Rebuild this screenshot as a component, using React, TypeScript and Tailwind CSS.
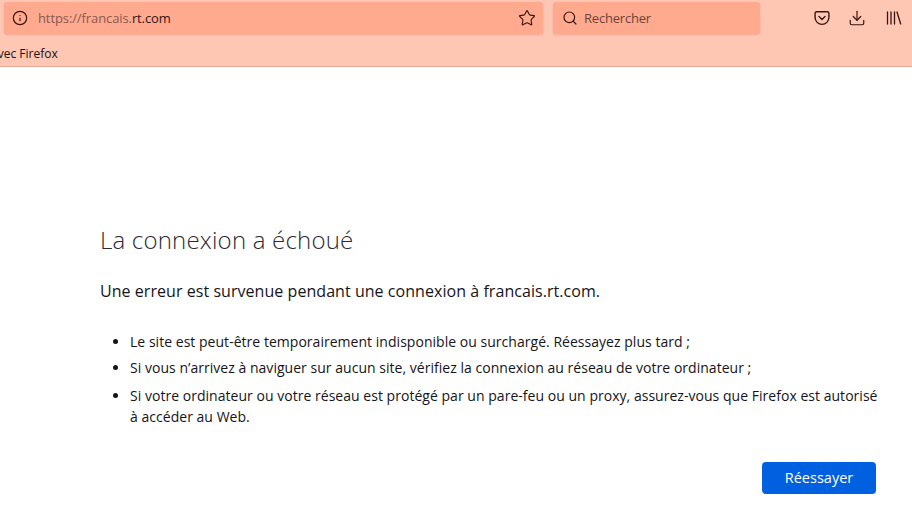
import { Info, Star, Search, Download } from 'lucide-react';

const REASONS = [
  'Le site est peut-être temporairement indisponible ou surchargé. Réessayez plus tard ;',
  'Si vous n’arrivez à naviguer sur aucun site, vérifiez la connexion au réseau de votre ordinateur ;',
  'Si votre ordinateur ou votre réseau est protégé par un pare-feu ou un proxy, assurez-vous que Firefox est autorisé à accéder au Web.',
];

function PocketIcon() {
  return (
    <svg width="16" height="16" viewBox="0 0 16 16" fill="none" stroke="#3a1410" strokeWidth="1.4" strokeLinecap="round" strokeLinejoin="round">
      <path d="M2.5 1.8h11a1.4 1.4 0 0 1 1.4 1.4v4.3a6.9 6.9 0 0 1-13.8 0V3.2a1.4 1.4 0 0 1 1.4-1.4z" />
      <path d="M5 6.6l3 2.8 3-2.8" />
    </svg>
  );
}

function LibraryIcon() {
  return (
    <svg width="16" height="16" viewBox="0 0 16 16" fill="none" stroke="#3a1410" strokeWidth="1.3" strokeLinecap="round">
      <path d="M1.5 2v12M5 2v12M8.5 2v12M11 2l3.7 12" />
    </svg>
  );
}

function Toolbar() {
  return (
    <div className="h-[67px] shrink-0 border-b border-[#eba998] bg-[#fec7b4] text-[#3a1410]">
      <div className="flex h-[36px] items-start pl-1 pt-[2px]">
        <div className="flex h-8 w-[539px] items-center rounded-[3px] bg-[#ffa98f] pl-[8px] pr-[7px] shadow-[0_1px_2px_rgba(200,100,80,0.3)]">
          <Info size={16} strokeWidth={1.8} />
          <span className="ml-[10px] flex-1 pt-[2px] text-[13px] tracking-[-0.1px]">
            <span className="text-[#8a5a50]">https://francais.</span>rt.com
          </span>
          <Star size={18} strokeWidth={1.5} />
        </div>
        <div className="ml-[10px] flex h-8 w-[207px] items-center rounded-[3px] bg-[#ffa98f] pl-[9px] shadow-[0_1px_2px_rgba(200,100,80,0.3)]">
          <Search size={16} strokeWidth={1.8} />
          <span className="ml-[6px] pt-[2px] text-[13px] tracking-[-0.2px] text-[#6f4438]">Rechercher</span>
        </div>
        <div className="ml-[54px] flex h-8 items-center">
          <PocketIcon />
          <Download size={18} strokeWidth={1.6} className="ml-[18px]" />
          <span className="ml-[20px]"><LibraryIcon /></span>
        </div>
      </div>
      <div className="mt-[9px] overflow-hidden text-[12px] leading-[17px] text-[#1f0f0c]">
        <span className="-ml-[9px] block whitespace-nowrap">avec Firefox</span>
      </div>
    </div>
  );
}

export default function App() {
  return (
    <div className="flex h-[528px] w-[912px] flex-col overflow-hidden bg-white font-['Open_Sans',sans-serif]">
      <Toolbar />
      <main className="pl-[100px] pr-[30px] pt-[156px] text-[#15141a]">
        <h1 className="text-[24px] leading-[34px] font-light tracking-[0.2px] text-[#2b2a33]">La connexion a échoué</h1>
        <p className="mt-[22px] text-[16px] leading-[24px] tracking-[0.05px]">
          Une erreur est survenue pendant une connexion à francais.rt.com.
        </p>
        <ul className="mt-[28px] list-disc pl-[30px] text-[14px] leading-[21px] tracking-[0.03px]">
          {REASONS.map((reason) => (
            <li key={reason} className="mb-[5px] last:mt-[7px]">{reason}</li>
          ))}
        </ul>
        <div className="mt-[35px] flex justify-end pr-[6px]">
          <button className="h-8 w-[114px] rounded-[4px] bg-[#0060df] text-[14.5px] font-medium text-white">
            Réessayer
          </button>
        </div>
      </main>
    </div>
  );
}
